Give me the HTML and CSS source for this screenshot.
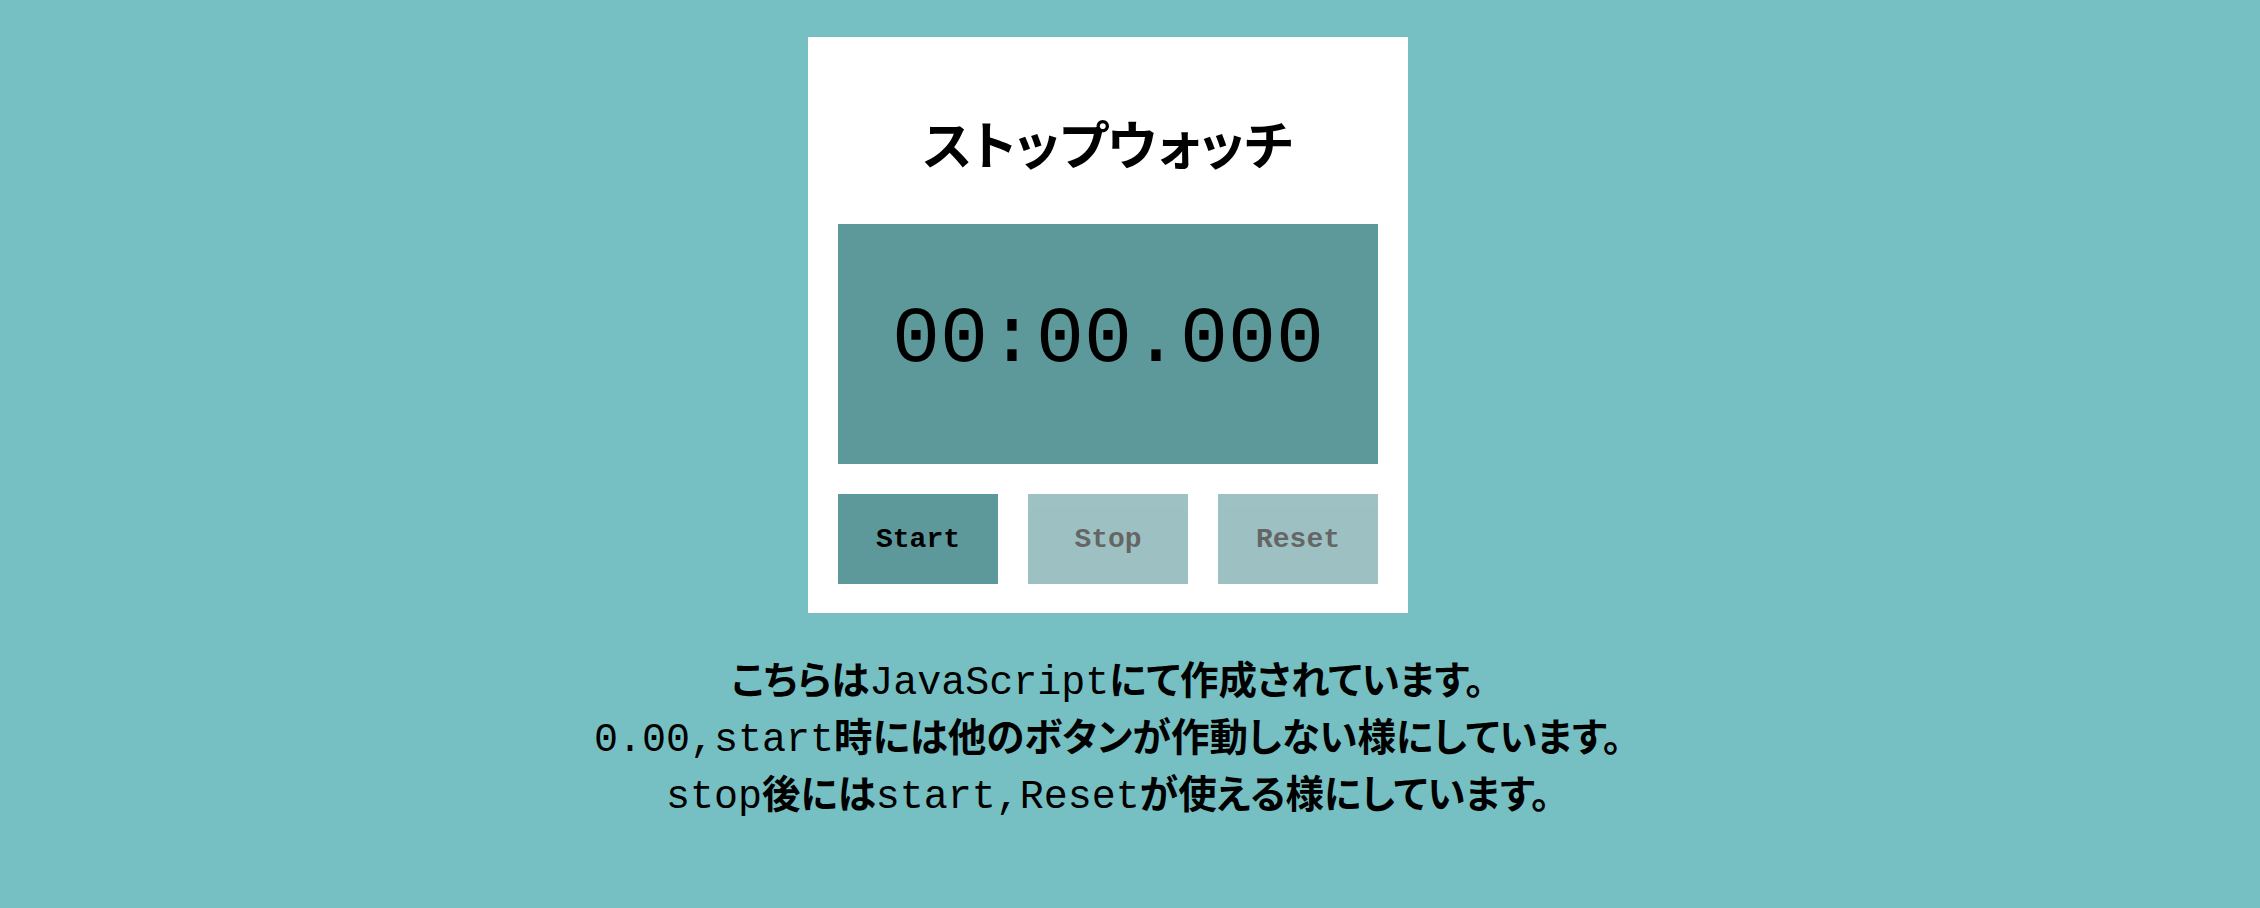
FILE: index.html
```html
<!DOCTYPE html>
<html lang="ja">
<head>
<meta charset="utf-8">
<title>ストップウォッチ</title>
<link rel="stylesheet" href="styles.css">
</head>
<body>
<div class="page">
  <div class="card">
    <h1 class="title">ストップウォッチ</h1>
    <div class="display">00:00.000</div>
    <div class="buttons">
      <button class="btn">Start</button>
      <button class="btn disabled">Stop</button>
      <button class="btn disabled">Reset</button>
    </div>
  </div>
  <div class="notes">
    <p class="line">こちらは<span class="mono">JavaScript</span>にて作成されています。</p>
    <p class="line"><span class="mono">0.00,start</span>時には他のボタンが作動しない様にしています。</p>
    <p class="line"><span class="mono">stop</span>後には<span class="mono">start,Reset</span>が使える様にしています。</p>
  </div>
</div>
</body>
</html>
```
FILE: styles.css
```css
html, body {
  margin: 0;
  padding: 0;
  background: #76c0c3;
  height: 100%;
}
body {
  font-family: "Noto Sans CJK JP", "Noto Sans", sans-serif;
  color: #000;
}
.page {
  display: flex;
  flex-direction: column;
  align-items: center;
  padding: 37px 44px 0 0;
}
.card {
  width: 540px;
  background: #fff;
  padding: 0 30px 29px;
  display: flex;
  flex-direction: column;
}
.title {
  margin: 0;
  height: 187px;
  display: flex;
  align-items: center;
  justify-content: center;
  padding-top: 24px;
  box-sizing: border-box;
  font-size: 52px;
  font-weight: 700;
  font-feature-settings: "palt";
  line-height: 1;
}
.display {
  height: 240px;
  background: #5d989b;
  display: flex;
  align-items: center;
  justify-content: center;
  font-family: "Liberation Mono", "Courier New", monospace;
  font-size: 80px;
  line-height: 1;
  padding-bottom: 8px;
  box-sizing: border-box;
}
.buttons {
  display: flex;
  gap: 30px;
  margin-top: 30px;
}
.btn {
  width: 160px;
  height: 90px;
  border: none;
  background: #5d989b;
  color: #000;
  font-family: "Liberation Mono", "Courier New", monospace;
  font-weight: 700;
  font-size: 28px;
  padding: 0;
}
.btn.disabled {
  opacity: 0.6;
}
.notes {
  margin-top: 36px;
  text-align: center;
}
.line {
  margin: 0;
  font-size: 38.5px;
  line-height: 57px;
  height: 57px;
  font-weight: 700;
  font-feature-settings: "palt";
  white-space: nowrap;
}
.mono {
  font-family: "Liberation Mono", "Courier New", monospace;
  font-weight: 400;
  font-size: 40px;
  line-height: 1;
}
```
